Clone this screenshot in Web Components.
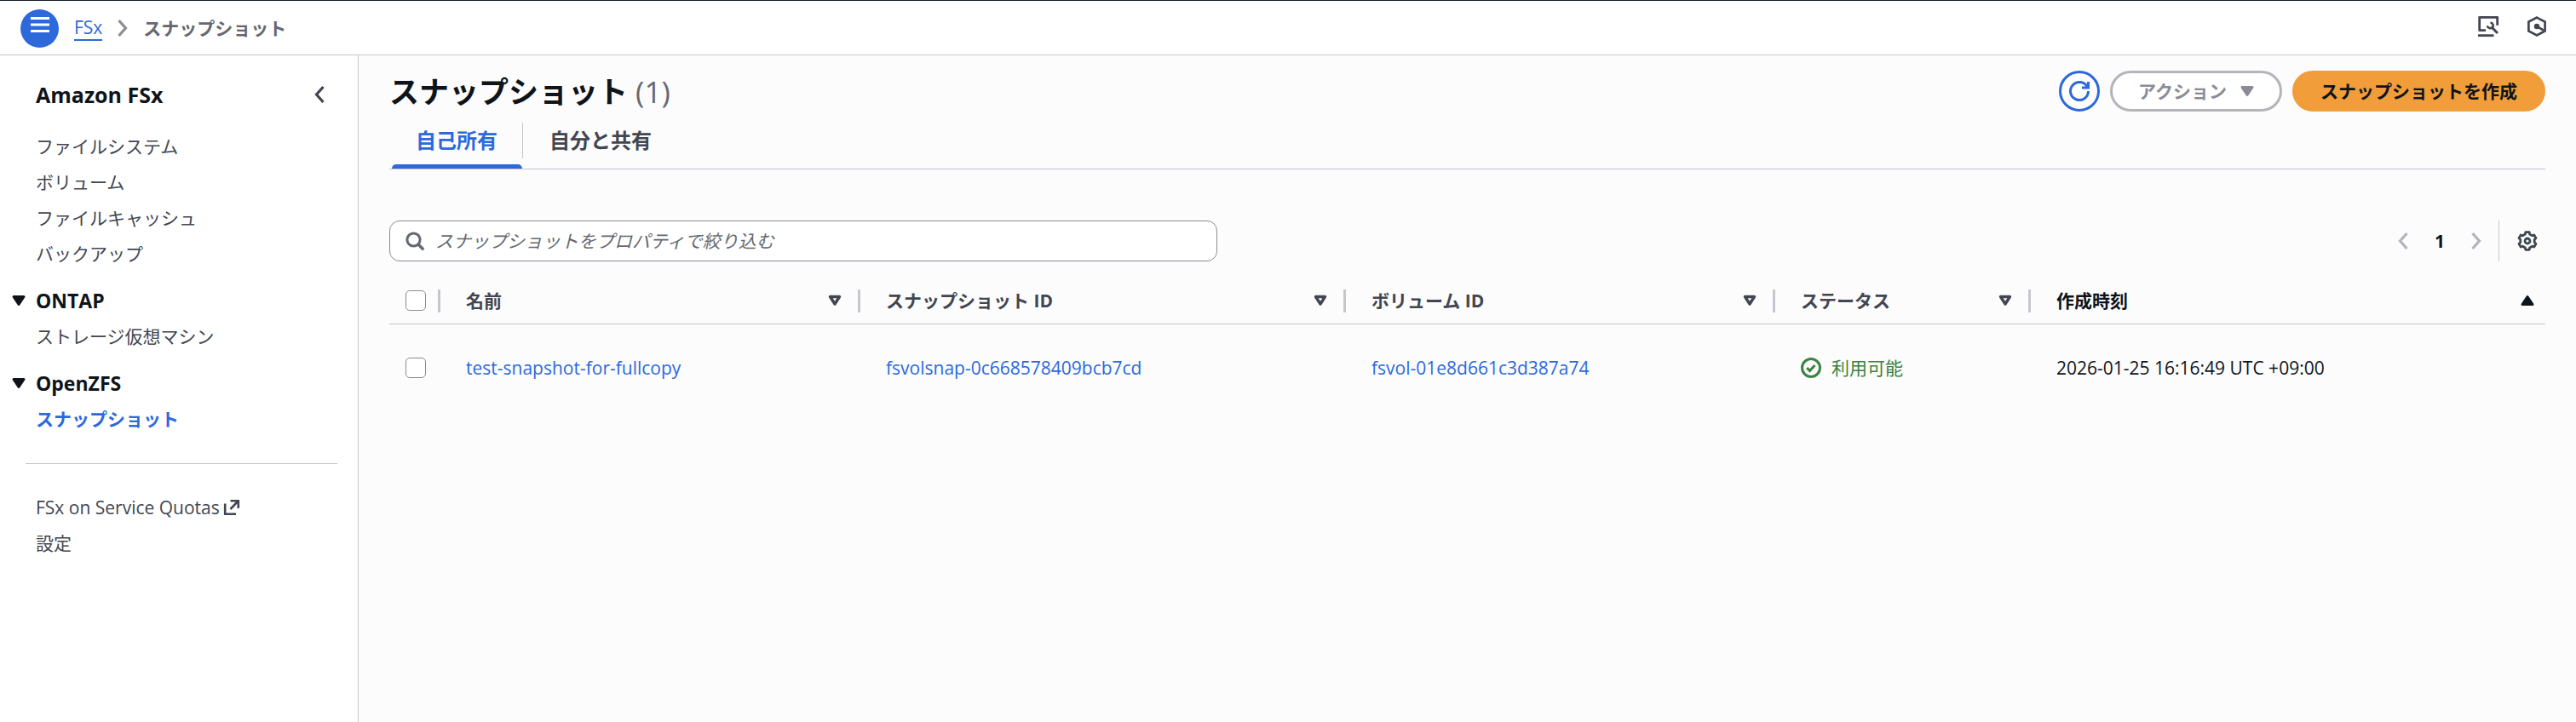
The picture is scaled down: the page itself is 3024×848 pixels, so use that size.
<!DOCTYPE html>
<html lang="ja">
<head>
<meta charset="utf-8">
<title>スナップショット | Amazon FSx</title>
<style>
  html, body { margin: 0; }
  body {
    --blue: #2d69db;
    --ink: #0f141a;
    --body: #424650;
    --muted: #656871;
    --line: #c6c6cd;
    --control: #8c8c94;
    --disabled: #b4b4bb;
    background: #fcfcfd;
    color: var(--ink);
    font: 21px/30px "Open Sans", "Noto Sans CJK JP", sans-serif;
  }
</style>
</head>
<body>
<fsx-app>
  <top-bar slot="top"></top-bar>
  <side-nav slot="nav" heading="Amazon FSx">
    <nav-list>
      <nav-item>ファイルシステム</nav-item>
      <nav-item>ボリューム</nav-item>
      <nav-item>ファイルキャッシュ</nav-item>
      <nav-item>バックアップ</nav-item>
    </nav-list>
    <nav-list heading="ONTAP">
      <nav-item>ストレージ仮想マシン</nav-item>
    </nav-list>
    <nav-list heading="OpenZFS">
      <nav-item current>スナップショット</nav-item>
    </nav-list>
    <nav-list footer>
      <nav-item external>FSx on Service Quotas</nav-item>
      <nav-item>設定</nav-item>
    </nav-list>
  </side-nav>
  <page-header counter="(1)">
    スナップショット
    <ui-button slot="actions" kind="icon" label="更新"><ui-icon name="refresh"></ui-icon></ui-button>
    <ui-button slot="actions" kind="menu" disabled>アクション</ui-button>
    <ui-button slot="actions" kind="primary">スナップショットを作成</ui-button>
  </page-header>
  <tab-bar></tab-bar>
  <table-tools></table-tools>
  <snapshot-table></snapshot-table>
</fsx-app>

<script>
const ICONS = {
  menu: '<path d="M1 .5h22M1 8h22M1 15.500h22" stroke-width="3"/>',
  left: '<path d="M16.500 3 8.500 12l8 9" stroke-width="3.200"/>',
  right: '<path d="m7.500 3 8 9-8 9" stroke-width="3.200"/>',
  down: '<path d="M6 7.500h12l-6 9z" fill="currentColor" stroke-width="3" stroke-linejoin="round"/>',
  up: '<path d="M6 16.500h12l-6-9z" fill="currentColor" stroke-width="3" stroke-linejoin="round"/>',
  sort: '<path d="M6.500 7.500h11l-5.500 8.500z" stroke-width="3.400" stroke-linejoin="round"/>',
  refresh: '<path d="M22.500 1v7H15" stroke-width="3"/><path d="M22.500 12A10.500 10.500 0 1 1 21.400 7.300" stroke-width="3"/>',
  search: '<circle cx="10.500" cy="10.500" r="7.600" stroke-width="3"/><path d="m15.800 15.800 6.400 6.400" stroke-width="3.400"/>',
  check: '<circle cx="12" cy="12" r="10.500" stroke-width="3"/><path d="m7.200 12 3.300 3.500 6-6.500" stroke-width="3"/>',
  external: '<path d="M4.200 7.500v12.300H17M10.500 4.200h9.300V13M19.800 4.200 10.500 14" stroke-width="2.600"/>',
  gear: '<path d="M9.800 1.700h4.400l.4 2.300 3.030 1.750 2.190-.8L22 8.750 20.230 10.250v3.500L22 15.250l-2.180 3.800-2.190-.8L14.600 20l-.4 2.300H9.800L9.400 20l-3.030-1.750-2.190.8L2 15.250l1.770-1.500v-3.500L2 8.750l2.180-3.800 2.190.8L9.400 4z" stroke-width="2.800" stroke-linejoin="round"/><circle cx="12" cy="12" r="3" stroke-width="2.800"/>',
  tools: '<path d="M9 16.700H1.700V1.300h21v9.500" stroke-width="2.800" stroke-linejoin="round"/><path d="M0 22.700h18.500" stroke-width="2.800"/><path d="m15.500 12.500 7.500 7.500" stroke-width="3"/><path d="M14.500 7.500c3 .5 4.200 3.500 2.500 5.500-1.800 2-5.500 1.300-6.200-1.700" stroke-width="2.600"/>',
  hexagon: '<path d="m12 1.600 9.600 5v10.800l-9.600 5-9.600-5V6.600z" stroke-width="2.700"/><circle cx="12" cy="12" r="3.200" fill="currentColor" stroke="none"/><path d="m12 12 8 4.600" stroke-width="2.800"/>'
};

const define = (name, css, html) => customElements.define(name, class extends HTMLElement {
  connectedCallback() {
    if (this.shadowRoot) return;
    const root = this.attachShadow({ mode: "open" });
    root.innerHTML = `<style>*{box-sizing:border-box}a{color:inherit;text-decoration:none}button{font:inherit;color:inherit;margin:0;padding:0;border:0;background:none}${css}</style>`
      + (typeof html === "function" ? html(this) : html);
  }
});

define("ui-icon",
  `:host{display:inline-flex;flex:none;width:24px;height:24px}svg{width:100%;height:100%;display:block;overflow:visible}`,
  el => `<svg viewBox="0 0 24 24" fill="none" stroke="currentColor" aria-hidden="true">${ICONS[el.getAttribute("name")]}</svg>`);

define("fsx-app",
  `:host{display:flex;flex-direction:column;min-height:100vh}
   .body{display:flex;flex:1}
   main{flex:1;min-width:0;padding:18px 36px 36px}`,
  `<slot name="top"></slot><div class="body"><slot name="nav"></slot><main><slot></slot></main></div>`);

define("top-bar",
  `:host{display:flex;align-items:center;justify-content:space-between;height:65px;box-sizing:border-box;padding:1px 34px 0 24px;border-top:1px solid #161d26;border-bottom:1px solid var(--line);background:#fff;color:var(--body)}
   .menu{display:flex;align-items:center;justify-content:center;width:45px;height:45px;border-radius:50%;background:var(--blue);color:#fff}
   nav,.tools{display:flex;align-items:center}
   nav a{margin-left:18px;color:var(--blue);border-bottom:2px solid var(--blue);line-height:28px}
   .sep{margin:0 12px;color:var(--control)}
   nav strong{color:var(--muted)}
   .tools{gap:33px;padding-bottom:4px}.tools button{display:flex}`,
  `<nav aria-label="パンくずリスト"><button class="menu" aria-label="メニュー"><ui-icon name="menu"></ui-icon></button>
   <a href="#">FSx</a><ui-icon class="sep" name="right"></ui-icon><strong>スナップショット</strong></nav>
   <div class="tools"><button aria-label="ツール"><ui-icon name="tools"></ui-icon></button><button aria-label="アシスタント"><ui-icon name="hexagon"></ui-icon></button></div>`);

define("side-nav",
  `:host{display:block;flex:none;width:421px;box-sizing:border-box;border-right:1px solid var(--line);background:#fff}
   header{display:flex;align-items:center;justify-content:space-between;padding:30px 33px 30px 42px}
   h2{margin:0;font-size:25px;line-height:32px;font-weight:700}
   button{display:flex;color:var(--body)}`,
  el => `<header><h2>${el.getAttribute("heading")}</h2><button aria-label="ナビゲーションを閉じる"><ui-icon name="left"></ui-icon></button></header><slot></slot>`);

define("nav-list",
  `:host{display:block;margin-bottom:25px}
   :host([footer]){margin:0 24px 0 30px;padding-top:36px;border-top:1px solid var(--line)}
   .items{display:flex;flex-direction:column;gap:12px;padding-left:42px}
   :host([footer]) .items{padding-left:12px}
   h3{display:flex;align-items:center;gap:8px;margin:0 0 12px 10px;font-size:23px;line-height:30px;font-weight:700}`,
  el => (el.hasAttribute("heading") ? `<h3><ui-icon name="down"></ui-icon>${el.getAttribute("heading")}</h3>` : "") + `<div class="items"><slot></slot></div>`);

define("nav-item",
  `:host{display:block;color:var(--body)}
   :host([current]){color:var(--blue);font-weight:700;margin-bottom:12px}
   a{display:inline-flex;align-items:center;gap:2px}`,
  el => `<a href="#"><slot></slot>${el.hasAttribute("external") ? '<ui-icon name="external"></ui-icon>' : ""}</a>`);

define("page-header",
  `:host{display:flex;align-items:center;justify-content:space-between;height:48px}
   h1{margin:0;font-size:35px;line-height:45px;font-weight:700}
   h1 span{color:var(--muted);font-size:35px;font-weight:400}
   .actions{display:flex;gap:12px}`,
  el => `<h1><slot></slot><span>${el.getAttribute("counter")}</span></h1><div class="actions"><slot name="actions"></slot></div>`);

define("ui-button",
  `:host{display:block;font-weight:700}
   button{display:flex;align-items:center;justify-content:center;gap:12px;height:48px;padding:0 30px;border:3px solid var(--blue);border-radius:30px;background:#fff;color:var(--blue)}
   .icon{width:48px;padding:0}
   .menu{padding-right:26px;border-color:var(--disabled);color:var(--control)}
   .primary{background:#f09d3a;border-color:#f09d3a;color:var(--ink)}`,
  el => `<button class="${el.getAttribute("kind")}" ${el.hasAttribute("label") ? `aria-label="${el.getAttribute("label")}"` : ""} ${el.hasAttribute("disabled") ? "disabled" : ""}><slot></slot>${el.getAttribute("kind") === "menu" ? '<ui-icon name="down"></ui-icon>' : ""}</button>`);

define("tab-bar",
  `:host{display:flex;height:68px;box-sizing:border-box;padding-top:13px;border-bottom:1px solid var(--line);font-size:24px;font-weight:700;color:var(--body)}
   button{display:flex;flex-direction:column;justify-content:space-between;height:54px;margin-left:3px}
   span{line-height:36px;padding:3px 28px;margin-right:1px}
   i{width:153px;height:5px;border-radius:6px 6px 0 0}
   .on{color:var(--blue)}.on i{background:var(--blue)}
   hr{width:1px;height:42px;margin:0;border:0;background:var(--line)}`,
  `<button class="on" role="tab" aria-selected="true"><span>自己所有</span><i></i></button><hr><button role="tab" aria-selected="false"><span>自分と共有</span><i></i></button>`);

define("table-tools",
  `:host{display:flex;align-items:center;justify-content:space-between;margin-top:60px;height:48px}
   label{display:flex;align-items:center;gap:12px;flex:0 1 972px;height:48px;padding:0 17px;border:1px solid var(--control);border-radius:12px;background:#fff;color:var(--muted)}
   input{flex:1;min-width:0;height:30px;padding:0;border:0;outline:0;background:none;font:inherit}
   input::placeholder{color:var(--muted);opacity:1;font-style:italic}
   .pages{display:flex;align-items:center;height:48px}
   button{display:flex;justify-content:center}
   .step{color:var(--disabled)}
   .num{width:62px;font-weight:700}
   .gear{margin-left:14px;padding:12px 9px 12px 21px;border-left:1px solid var(--line);color:var(--body)}`,
  `<label><ui-icon name="search"></ui-icon><input type="search" aria-label="スナップショットをプロパティで絞り込む" placeholder="スナップショットをプロパティで絞り込む"></label>
   <div class="pages"><button class="step" aria-label="前のページ" disabled><ui-icon name="left"></ui-icon></button><button class="num">1</button><button class="step" aria-label="次のページ" disabled><ui-icon name="right"></ui-icon></button><button class="gear" aria-label="設定"><ui-icon name="gear"></ui-icon></button></div>`);

define("snapshot-table",
  `:host{display:block;margin-top:19px}
   table{width:100%;table-layout:fixed;border-collapse:separate;border-spacing:0;text-align:left}
   th{height:55px;padding:0;border-bottom:1px solid var(--line);color:var(--body);font-weight:700}
   th div{display:flex;align-items:center;padding-left:30px}
   th div.pick{padding-left:19px}
   th ui-icon{margin-left:auto;margin-right:15px}
   th i{width:3px;height:27px;background:var(--line)}
   .pick i{margin-left:auto}
   th.sorted{color:var(--ink)}th.sorted ui-icon{margin-right:9px}
   td{height:102px;padding:0 0 0 30px}
   td.pick{padding-left:19px}
   input{appearance:none;display:block;width:24px;height:24px;margin:0;border:1px solid var(--control);border-radius:5px;background:#fff}
   a{color:var(--blue)}
   .ok{display:flex;align-items:center;gap:12px;color:#3a8340}
   .c0{width:60px}.c1{width:493px}.c2{width:570px}.c3{width:504px}.c4{width:300px}`,
  `<table><colgroup><col class="c0"><col class="c1"><col class="c2"><col class="c3"><col class="c4"><col></colgroup>
   <thead><tr>
     <th><div class="pick"><input type="checkbox" aria-label="すべて選択"><i></i></div></th>
     ${["名前", "スナップショット ID", "ボリューム ID", "ステータス"].map(t => `<th scope="col"><div>${t}<ui-icon name="sort"></ui-icon><i></i></div></th>`).join("")}
     <th scope="col" class="sorted" aria-sort="ascending"><div>作成時刻<ui-icon name="up"></ui-icon></div></th>
   </tr></thead>
   <tbody><tr>
     <td class="pick"><input type="checkbox" aria-label="test-snapshot-for-fullcopy を選択"></td>
     <td><a href="#">test-snapshot-for-fullcopy</a></td>
     <td><a href="#">fsvolsnap-0c668578409bcb7cd</a></td>
     <td><a href="#">fsvol-01e8d661c3d387a74</a></td>
     <td><div class="ok"><ui-icon name="check"></ui-icon>利用可能</div></td>
     <td>2026-01-25 16:16:49 UTC +09:00</td>
   </tr></tbody></table>`);
</script>
</body>
</html>
